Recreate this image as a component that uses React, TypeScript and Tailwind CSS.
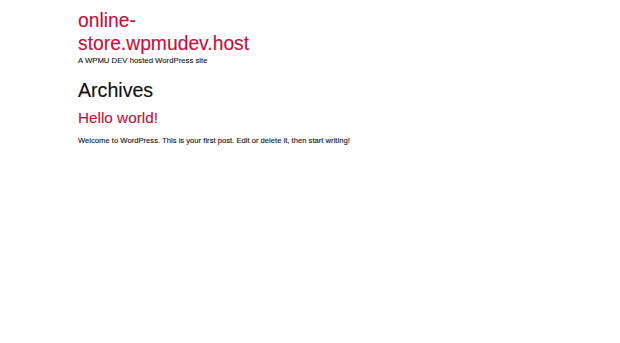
export default function App() {
  return (
    <div className="min-h-[343px] bg-white font-['Liberation_Sans',Arial,sans-serif] text-[#111]">
      <div className="pl-[78px] pt-[9px]">
        <header>
          <p className="w-[180px] text-[19.3px] leading-[23px] text-[#c4103c] [-webkit-text-stroke:0.15px]">
            online-store.wpmudev.host
          </p>
          <p className="mt-[1px] text-[7.75px] leading-[10px] [-webkit-text-stroke:0.1px]">
            A WPMU DEV hosted WordPress site
          </p>
        </header>
        <main className="mt-[12px]">
          <h1 className="text-[19.6px] leading-[24px] [-webkit-text-stroke:0.15px]">Archives</h1>
          <article className="mt-[6px]">
            <h2 className="text-[15.3px] leading-[20px] text-[#c4103c] [-webkit-text-stroke:0.15px]">
              Hello world!
            </h2>
            <p className="mt-[8px] text-[7.65px] leading-[10px] [-webkit-text-stroke:0.1px]">
              Welcome to WordPress. This is your first post. Edit or delete it, then start writing!
            </p>
          </article>
        </main>
      </div>
    </div>
  );
}
